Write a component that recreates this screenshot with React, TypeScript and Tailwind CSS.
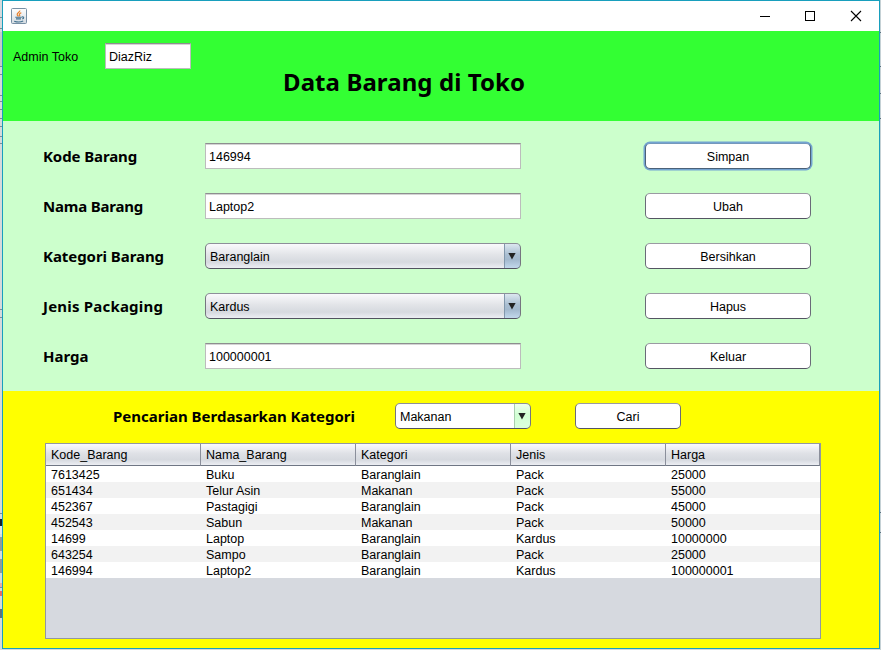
import type { ReactNode } from 'react';

const columns = ['Kode_Barang', 'Nama_Barang', 'Kategori', 'Jenis', 'Harga'];

const rows = [
  ['7613425', 'Buku', 'Baranglain', 'Pack', '25000'],
  ['651434', 'Telur Asin', 'Makanan', 'Pack', '55000'],
  ['452367', 'Pastagigi', 'Baranglain', 'Pack', '45000'],
  ['452543', 'Sabun', 'Makanan', 'Pack', '50000'],
  ['14699', 'Laptop', 'Baranglain', 'Kardus', '10000000'],
  ['643254', 'Sampo', 'Baranglain', 'Pack', '25000'],
  ['146994', 'Laptop2', 'Baranglain', 'Kardus', '100000001'],
];

function TextField({ value, className }: { value: string; className: string }) {
  return (
    <div
      className={`flex h-[26px] items-center border border-[#bcbcbc] border-t-[#8d8e8f] bg-white pl-[3px] pt-px shadow-[inset_0_1px_0_#d4d4d4] ${className}`}
    >
      {value}
    </div>
  );
}

function Button({ children, focused, className }: { children: ReactNode; focused?: boolean; className: string }) {
  return (
    <button
      className={`flex h-[26px] items-center justify-center rounded-[5px] border pt-px ${
        focused
          ? 'border-[#4c6178] border-t-[#7598bb] bg-white shadow-[0_0_0_1.5px_#73a4d1]'
          : 'border-[#6a6a78] border-t-[#9a9aa2] border-b-[#555563] bg-white'
      } ${className}`}
    >
      {children}
    </button>
  );
}

function Combo({ value, plain, className }: { value: string; plain?: boolean; className: string }) {
  return (
    <div
      className={`flex h-[26px] overflow-hidden rounded-[5px] border border-[#75757f] border-t-[#8d8f99] border-b-[#525260] ${
        plain ? 'bg-white' : 'bg-[linear-gradient(#fafafc,#e2e4e8_45%,#d6d9df_75%,#eceef3)]'
      } ${className}`}
    >
      <div className="flex flex-1 items-center pl-1 pt-px">{value}</div>
      <div
        className={`-my-px -mr-px flex w-[17px] justify-center rounded-r-[5px] border pr-px pt-[9px] ${
          plain
            ? 'border-[#4c705c] border-l-[#a8cfad] bg-[linear-gradient(#effff0,#d1ffd3_45%,#dcffdd)]'
            : 'border-[#34567a] border-l-[#8298ac] border-t-[#768da5] bg-[linear-gradient(#dce7f0,#a9bed1_45%,#a3b9ce_65%,#c2d8ec)]'
        }`}
      >
        <svg width="8" height="7" viewBox="0 0 8 7">
          <path d="M.4 0h7.2L4 6.6z" fill="#222" />
        </svg>
      </div>
    </div>
  );
}

function Label({ children, className }: { children: ReactNode; className: string }) {
  return (
    <div
      className={`whitespace-nowrap font-['Noto_Sans','Open_Sans',sans-serif] text-[15px] font-bold leading-[26px] ${className}`}
    >
      {children}
    </div>
  );
}

function FormRow({
  label,
  tracking = 'tracking-normal',
  field,
  action,
}: {
  label: string;
  tracking?: string;
  field: ReactNode;
  action: ReactNode;
}) {
  return (
    <div className="flex h-[26px]">
      <Label className={`w-[162px] ${tracking}`}>{label}</Label>
      {field}
      <div className="ml-[124px]">{action}</div>
    </div>
  );
}

function JavaIcon() {
  return (
    <svg width="16" height="16" viewBox="0 0 16 16" fill="none">
      <defs>
        <linearGradient id="tile" x1="0" y1="0" x2="0" y2="1">
          <stop offset="0" stopColor="#fff" />
          <stop offset="1" stopColor="#d3dbe1" />
        </linearGradient>
      </defs>
      <rect x=".5" y=".5" width="15" height="15" rx="1" fill="url(#tile)" stroke="#7890a5" />
      <path d="M8.8 2.5c.4 1.6-3.2 2.6-2.6 4.2.2.6.9 1 1.2 1.7M10.3 4.8C8.6 5.5 8 6.2 8.6 7c.3.4.2.9-.3 1.3" stroke="#e9812b" strokeWidth="1.2" />
      <path d="M4.3 9.2h6.5M5 10.9h5M11 9.1c2-.8 2.4 1.2.3 1.8M3.2 13.2c2.5.9 7 .8 9-.1" stroke="#43728f" strokeWidth="1.1" />
    </svg>
  );
}

function Edge({ y, height, color }: { y: number; height: number; color: string }) {
  return <rect x="0" y={y} width="2" height={height} fill={color} />;
}

export default function App() {
  return (
    <div className="flex h-[650px] w-[881px] bg-[#d6d9db] font-['Liberation_Sans',Arial,sans-serif] text-[12.5px] leading-4 text-black">
      <svg className="shrink-0" width="2" height="650">
        {[17, 28, 66, 74, 95, 101, 109, 118, 126, 136, 143, 309, 317, 513, 522, 568, 587].map((y) => (
          <Edge key={y} y={y} height={1} color="#7c8d98" />
        ))}
        <Edge y={32} height={34} color="#c5c9cb" />
        <Edge y={523} height={11} color="#dfe5e7" />
        <Edge y={519} height={7} color="#17202c" />
        <Edge y={537} height={14} color="#939c98" />
        <Edge y={559} height={14} color="#939c98" />
        <Edge y={583} height={4} color="#e7aaa8" />
        <Edge y={591} height={5} color="#e76c69" />
        <Edge y={609} height={9} color="#60727b" />
      </svg>
      <main className="flex h-[649px] w-[878px] shrink-0 flex-col border border-[#189fbd]">
        <header className="flex h-[30px] shrink-0 items-center bg-white pl-2 pr-[17px]">
          <JavaIcon />
          <svg className="ml-auto" width="102" height="12" viewBox="0 0 102 12" fill="none" stroke="#000" shapeRendering="crispEdges">
            <path d="M0 6.5h10" />
            <path d="M45.5 1.5h9v9h-9z" />
            <path d="M91 1l10 10M101 1L91 11" shapeRendering="auto" strokeWidth="1.1" />
          </svg>
        </header>
        <section className="h-[90px] shrink-0 bg-[#33ff33]">
          <div className="flex items-center pl-[10px] pt-3">
            <div className="w-[92px] pt-px">Admin Toko</div>
            <TextField value="DiazRiz" className="w-[86px]" />
          </div>
          <h1 className="-mt-[5px] ml-[280px] whitespace-nowrap font-['Noto_Sans','Open_Sans',sans-serif] text-[24px] font-bold leading-9 tracking-[0.08px]">
            Data Barang di Toko
          </h1>
        </section>
        <section className="flex h-[270px] shrink-0 flex-col gap-6 bg-[#ccffcc] pl-10 pt-[22px]">
          <FormRow
            label="Kode Barang"
            tracking="tracking-[-0.1px]"
            field={<TextField value="146994" className="w-[316px]" />}
            action={<Button focused className="w-[166px]">Simpan</Button>}
          />
          <FormRow
            label="Nama Barang"
            tracking="tracking-[-0.2px]"
            field={<TextField value="Laptop2" className="w-[316px]" />}
            action={<Button className="w-[166px]">Ubah</Button>}
          />
          <FormRow
            label="Kategori Barang"
            tracking="tracking-[-0.06px]"
            field={<Combo value="Baranglain" className="w-[316px]" />}
            action={<Button className="w-[166px]">Bersihkan</Button>}
          />
          <FormRow
            label="Jenis Packaging"
            tracking="tracking-[0.2px]"
            field={<Combo value="Kardus" className="w-[316px]" />}
            action={<Button className="w-[166px]">Hapus</Button>}
          />
          <FormRow
            label="Harga"
            field={<TextField value="100000001" className="w-[316px]" />}
            action={<Button className="w-[166px]">Keluar</Button>}
          />
        </section>
        <section className="flex-1 bg-[#ffff00] pt-3">
          <div className="flex pl-[110px]">
            <Label className="w-[282px]">Pencarian Berdasarkan Kategori</Label>
            <Combo plain value="Makanan" className="w-[136px]" />
            <Button className="ml-11 w-[106px]">Cari</Button>
          </div>
          <div className="ml-[42px] mt-[14px] h-[196px] w-[776px] border border-[#9297a1] bg-[#d6d9df]">
            <table className="w-full table-fixed border-separate border-spacing-0 text-left">
              <colgroup>
                <col className="w-[155px]" />
                <col className="w-[155px]" />
                <col className="w-[155px]" />
                <col className="w-[155px]" />
                <col className="w-[154px]" />
              </colgroup>
              <thead>
                <tr className="h-[22px]">
                  {columns.map((c) => (
                    <th
                      key={c}
                      className="h-[22px] border-b border-r border-[#8b8f9b] border-b-[#6f7684] bg-[linear-gradient(#fafafc,#dfe1e6_45%,#d6d9df_75%,#eceef3)] p-0 pl-[5px] font-normal"
                    >
                      {c}
                    </th>
                  ))}
                </tr>
              </thead>
              <tbody>
                {rows.map((row) => (
                  <tr key={row[0]} className="h-4 bg-white even:bg-[#f2f2f2]">
                    {row.map((cell, i) => (
                      <td key={columns[i]} className="h-4 p-0 pl-[5px]">
                        <div className="relative top-px leading-4">{cell}</div>
                      </td>
                    ))}
                  </tr>
                ))}
              </tbody>
            </table>
          </div>
        </section>
      </main>
      <svg className="shrink-0" width="1" height="650">
        <path d="M.5 0v650" stroke="#c5d1d5" />
        <path d="M.5 32v1M.5 66v1M.5 93v1M.5 118v1M.5 512v1M.5 532v1" stroke="#587080" />
      </svg>
    </div>
  );
}
